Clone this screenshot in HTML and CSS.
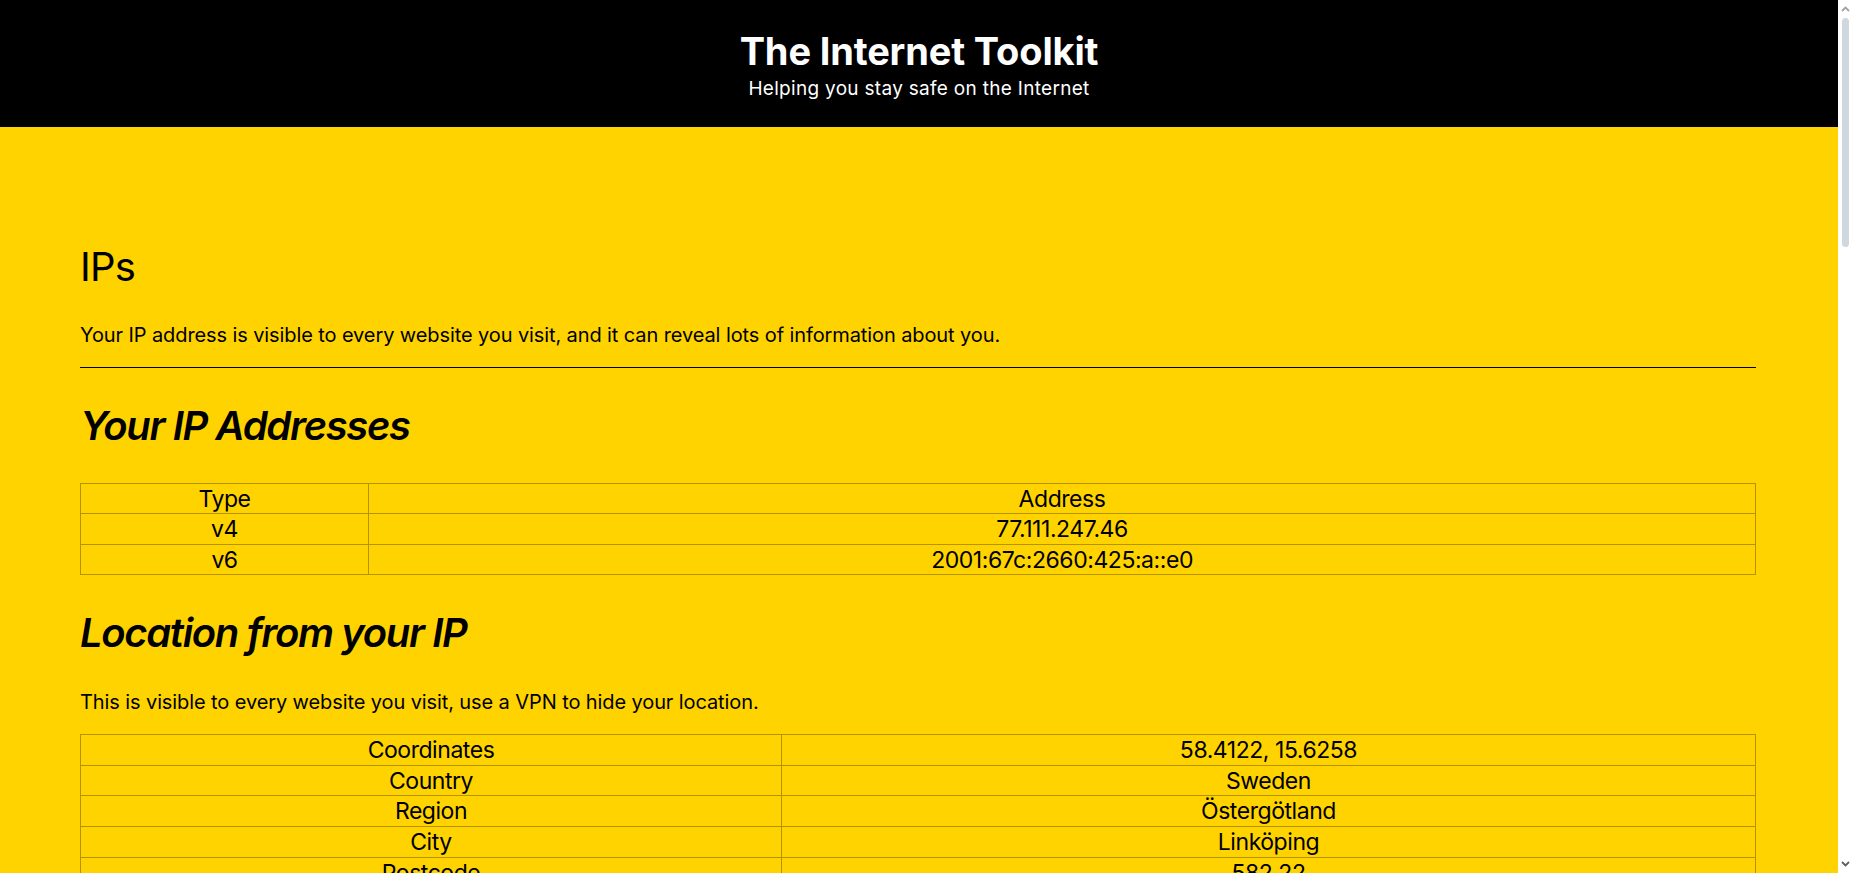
FILE: index.html
```html
<!DOCTYPE html>
<html lang="en">
<head>
<meta charset="utf-8">
<title>The Internet Toolkit</title>
<link rel="stylesheet" href="styles.css">
</head>
<body>
<header class="site-header">
  <div class="site-title">The Internet Toolkit</div>
  <div class="site-tagline">Helping you stay safe on the Internet</div>
</header>
<main class="content">
  <h1 class="page-title">IPs</h1>
  <p class="text">Your IP address is visible to every website you visit, and it can reveal lots of information about you.</p>
  <hr class="rule">
  <h2 class="section-title">Your IP Addresses</h2>
  <table class="data-table ip-table">
    <tr><td class="key">Type</td><td>Address</td></tr>
    <tr><td class="key">v4</td><td>77.111.247.46</td></tr>
    <tr><td class="key">v6</td><td>2001:67c:2660:425:a::e0</td></tr>
  </table>
  <h2 class="section-title">Location from your IP</h2>
  <p class="text">This is visible to every website you visit, use a VPN to hide your location.</p>
  <table class="data-table loc-table">
    <tr><td class="key">Coordinates</td><td>58.4122, 15.6258</td></tr>
    <tr><td class="key">Country</td><td>Sweden</td></tr>
    <tr><td class="key">Region</td><td>Östergötland</td></tr>
    <tr><td class="key">City</td><td>Linköping</td></tr>
    <tr><td class="key">Postcode</td><td>582 22</td></tr>
    <tr><td class="key">Timezone</td><td>Europe/Stockholm</td></tr>
  </table>
</main>
<div class="scrollbar" aria-hidden="true">
  <svg class="sb-arrow sb-up" width="9" height="6" viewBox="0 0 9 6"><path d="M1 5 L4.5 1.5 L8 5" fill="none" stroke="#a3a3a3" stroke-width="1.8"/></svg>
  <div class="sb-thumb"></div>
  <svg class="sb-arrow sb-down" width="9" height="6" viewBox="0 0 9 6"><path d="M1 1 L4.5 4.5 L8 1" fill="none" stroke="#5f5f5f" stroke-width="1.8"/></svg>
</div>
</body>
</html>
```
FILE: styles.css
```css
html {
  margin: 0;
  padding: 0;
  background: #fff;
}
body {
  margin: 0 15px 0 0;
  padding: 0;
  min-height: 100vh;
  background: #ffd300;
  color: #000;
  font-family: Inter, "Liberation Sans", sans-serif;
  font-size: 20px;
}
.site-header {
  box-sizing: border-box;
  height: 127px;
  background: #000;
  color: #fff;
  text-align: center;
  padding-top: 27.5px;
}
.site-title {
  font-size: 38px;
  font-weight: 700;
  letter-spacing: -0.15px;
  line-height: normal;
}
.site-tagline {
  font-size: 19px;
  letter-spacing: 0.3px;
  line-height: normal;
  margin-top: 3.2px;
}
.content {
  padding: 114.5px 82px 40px 80px;
}
.page-title {
  font-size: 40px;
  font-weight: 400;
  letter-spacing: -0.8px;
  line-height: normal;
  margin: 0 0 32px;
}
.text {
  font-size: 20px;
  letter-spacing: -0.1px;
  line-height: normal;
  margin: 20px 0;
}
.rule {
  border: none;
  border-top: 1px solid #000;
  height: 0;
  margin: 20px 0 0;
}
.section-title {
  font-size: 40px;
  font-style: italic;
  font-weight: 600;
  letter-spacing: -1.35px;
  line-height: normal;
  margin: 33px 0;
}
.data-table {
  width: 100%;
  border-collapse: collapse;
  font-size: 23px;
  letter-spacing: -0.45px;
}
.data-table td {
  border: 1px solid #b39400;
  padding: 1px 0 0;
  line-height: 28.6px;
  text-align: center;
}
.ip-table .key {
  width: 17.2%;
}
.loc-table .key {
  width: 41.85%;
}
.scrollbar {
  position: fixed;
  top: 0;
  right: 0;
  width: 15px;
  height: 100vh;
  background: #fff;
}
.sb-arrow {
  position: absolute;
  left: 3px;
}
.sb-up {
  top: 6px;
}
.sb-down {
  bottom: 6px;
}
.sb-thumb {
  position: absolute;
  left: 4px;
  top: 18px;
  width: 7px;
  height: 229px;
  border-radius: 4px;
  background: #cfd8de;
}
```
